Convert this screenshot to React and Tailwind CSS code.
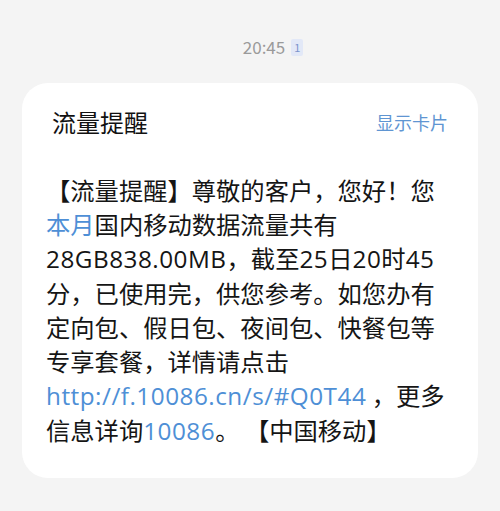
export default function App() {
  const latin = "font-['Open_Sans','Noto_Sans_CJK_SC',sans-serif] tracking-[0.5px]";
  return (
    <div className="min-h-[511px] w-[500px] bg-[#f4f4f4] font-['Noto_Sans_CJK_SC','Noto_Sans',sans-serif]">
      <div className="flex items-center justify-center gap-[6px] pt-[36px] h-[58px] pl-[46px]">
        <span className="text-[17px] leading-[22px] text-[#9a9a9a]">20:45</span>
        <span className="flex h-[17px] w-[12px] items-center justify-center rounded-[2px] bg-[#e2e8f7] text-[11px] leading-none text-[#7b93cc]">
          1
        </span>
      </div>

      <div className="mx-[22px] mt-[25px] rounded-[26px] bg-white pt-[23px] pb-[30px]">
        <div className="flex items-center justify-between pl-[30px] pr-[30px] h-[32px]">
          <span className="text-[24px] text-[#111]">流量提醒</span>
          <span className="text-[18px] text-[#5f95d2]">显示卡片</span>
        </div>

        <div className="mt-[35px] pl-[24px] text-[24.3px] leading-[34px] text-[#151515] whitespace-nowrap [text-spacing-trim:space-all]">
          【流量提醒】尊敬的客户，您好！您
          <br />
          <span className="text-[#4e8fd6]">本月</span>国内移动数据流量共有
          <br />
          <span className={latin}>28GB838.00MB</span>，截至<span className={latin}>25</span>日<span className={latin}>20</span>时<span className={latin}>45</span>
          <br />
          分，已使用完，供您参考。如您办有
          <br />
          定向包、假日包、夜间包、快餐包等
          <br />
          专享套餐，详情请点击
          <br />
          <span className={`${latin} text-[#4e8fd6]`}>http://f.10086.cn/s/#Q0T44</span> ，更多
          <br />
          信息详询<span className={`${latin} text-[#4e8fd6]`}>10086</span>。 【中国移动】
        </div>
      </div>
    </div>
  );
}
